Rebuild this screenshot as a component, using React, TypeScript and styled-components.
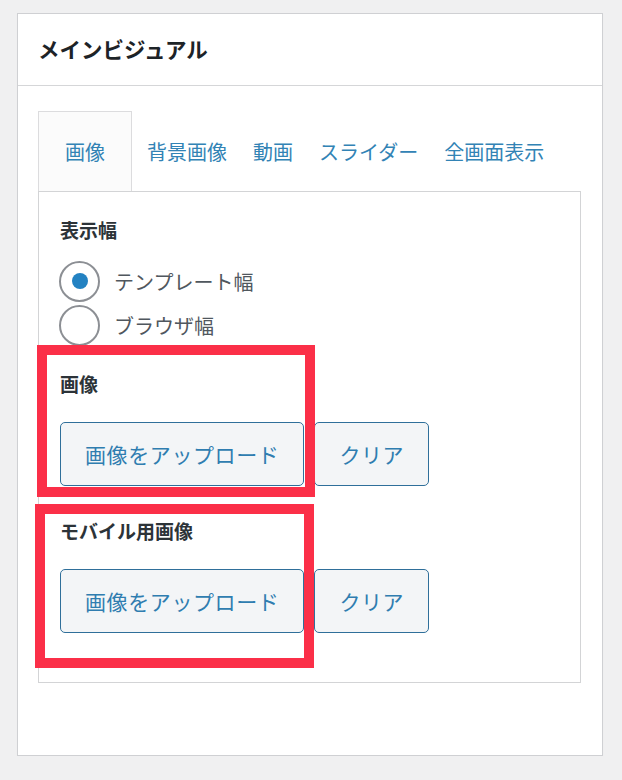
import React, { useState } from "react";
import styled, { createGlobalStyle } from "styled-components";

const GlobalStyle = createGlobalStyle`
  body {
    margin: 0;
    background: #f0f0f1;
    font-family: "Noto Sans CJK JP", "Noto Sans", sans-serif;
  }
`;

const TABS = ["画像", "背景画像", "動画", "スライダー", "全画面表示"];

const App = () => {
  const [tab, setTab] = useState(0);
  const [width, setWidth] = useState("template");

  return (
    <>
      <GlobalStyle />
      <Card>
        <CardHeader>
          <CardTitle>メインビジュアル</CardTitle>
        </CardHeader>
        <CardBody>
          <TabList>
            {TABS.map((t, i) => (
              <Tab key={t} $active={i === tab} onClick={() => setTab(i)}>
                {t}
              </Tab>
            ))}
          </TabList>
          <Panel>
            <FieldLabel>表示幅</FieldLabel>
            <RadioList>
              <RadioRow onClick={() => setWidth("template")}>
                <RadioCircle $checked={width === "template"} />
                <RadioText>テンプレート幅</RadioText>
              </RadioRow>
              <RadioRow onClick={() => setWidth("browser")}>
                <RadioCircle $checked={width === "browser"} />
                <RadioText>ブラウザ幅</RadioText>
              </RadioRow>
            </RadioList>

            <Field>
              <Highlight $top={0} $left={-23} $width={278} $height={152} />
              <FieldLabel>画像</FieldLabel>
              <ButtonRow>
                <Button>画像をアップロード</Button>
                <Button>クリア</Button>
              </ButtonRow>
            </Field>

            <Field>
              <Highlight $top={12} $left={-25} $width={279} $height={164} />
              <FieldLabel>モバイル用画像</FieldLabel>
              <ButtonRow>
                <Button>画像をアップロード</Button>
                <Button>クリア</Button>
              </ButtonRow>
            </Field>
          </Panel>
        </CardBody>
      </Card>
    </>
  );
};

const Card = styled.div`
  margin: 13px 19px 0 17px;
  background: #fff;
  border: 1px solid #cfd0d3;
  box-shadow: 0 1px 1px rgba(0, 0, 0, 0.04);
`;

const CardHeader = styled.div`
  height: 71px;
  display: flex;
  align-items: center;
  padding: 0 20px;
  border-bottom: 1px solid #d5d6d8;
`;

const CardTitle = styled.h2`
  margin: 0;
  font-size: 21.5px;
  font-weight: 700;
  color: #1d2327;
  line-height: 1;
  padding-bottom: 2px;
`;

const CardBody = styled.div`
  padding: 25px 21px 72px 20px;
`;

const TabList = styled.div`
  display: flex;
  height: 80px;
`;

const Tab = styled.div<{ $active: boolean }>`
  display: flex;
  align-items: center;
  padding: ${(p) => (p.$active ? "0 26px" : "0 12px")};
  margin-right: ${(p) => (p.$active ? "2px" : "0")};
  font-size: 20px;
  color: #3283b5;
  cursor: pointer;
  background: ${(p) => (p.$active ? "#fbfbfb" : "transparent")};
  border: 1px solid ${(p) => (p.$active ? "#dcdcde" : "transparent")};
  border-bottom: none;
`;

const Panel = styled.div`
  border: 1px solid #d3d4d6;
  padding: 26px 21px 49px 21px;
`;

const FieldLabel = styled.div`
  font-size: 19px;
  font-weight: 700;
  line-height: 24px;
  color: #2c3338;
`;

const RadioList = styled.div`
  display: flex;
  flex-direction: column;
  gap: 4px;
  margin-top: 19px;
`;

const RadioRow = styled.label`
  display: flex;
  align-items: center;
  gap: 14px;
  height: 40px;
  cursor: pointer;
`;

const RadioCircle = styled.span<{ $checked: boolean }>`
  box-sizing: border-box;
  width: 41px;
  height: 41px;
  margin-left: -1px;
  border-radius: 50%;
  border: 2px solid #8c8f94;
  background: #fff;
  display: flex;
  align-items: center;
  justify-content: center;
  &::after {
    content: "";
    display: ${(p) => (p.$checked ? "block" : "none")};
    width: 16px;
    height: 16px;
    border-radius: 50%;
    background: #2382c2;
  }
`;

const RadioText = styled.span`
  font-size: 20px;
  color: #50575e;
`;

const Field = styled.div`
  position: relative;
  padding-top: 27px;
  & + & {
    margin-top: 6px;
  }
`;

const Highlight = styled.div<{ $top: number; $left: number; $width: number; $height: number }>`
  position: absolute;
  top: ${(p) => p.$top}px;
  left: ${(p) => p.$left}px;
  width: ${(p) => p.$width}px;
  height: ${(p) => p.$height}px;
  box-sizing: border-box;
  border: 10px solid #fb2f48;
  z-index: 1;
  pointer-events: none;
`;

const ButtonRow = styled.div`
  display: flex;
  gap: 10px;
  margin-top: 26px;
`;

const Button = styled.button`
  height: 64px;
  padding: 0 24px;
  font-family: "Noto Sans CJK JP", "Noto Sans", sans-serif;
  font-size: 21px;
  letter-spacing: 0.6px;
  color: #2f7db0;
  background: #f3f5f7;
  border: 1.5px solid #2f6f9a;
  border-radius: 5px;
  cursor: pointer;
`;

export default App;
